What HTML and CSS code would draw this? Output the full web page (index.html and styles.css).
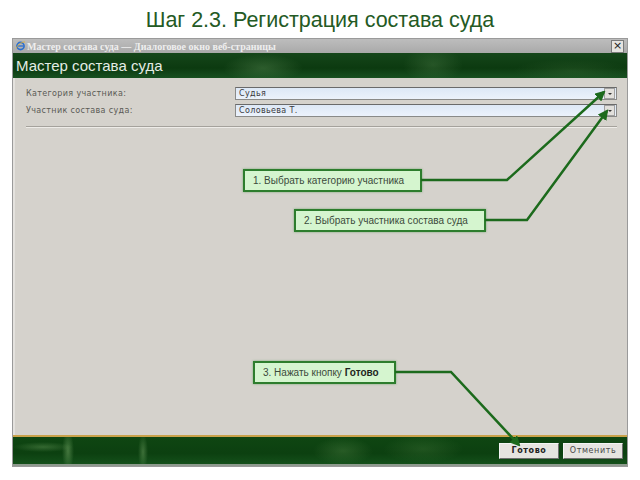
FILE: index.html
```html
<!DOCTYPE html>
<html lang="ru">
<head>
<meta charset="utf-8">
<title>Шаг 2.3. Регистрация состава суда</title>
<link rel="stylesheet" href="styles.css">
</head>
<body>
<h1 class="slide-title">Шаг 2.3. Регистрация состава суда</h1>
<div class="window">
  <div class="titlebar">
    <span class="ie-icon"><svg width="9" height="10" viewBox="0 0 9 10"><circle cx="4.5" cy="5" r="3.6" fill="none" stroke="#2a6fd0" stroke-width="1.6"/><path d="M1.5 5h6" stroke="#2a6fd0" stroke-width="1.3"/><path d="M0 7.5C3 2 6 1 9 1" stroke="#e0b030" stroke-width="0.9" fill="none"/></svg></span>
    <span class="titlebar-text">Мастер состава суда — Диалоговое окно веб-страницы</span>
    <span class="close-btn">×</span>
  </div>
  <div class="header"><span class="header-text">Мастер состава суда</span></div>
  <div class="content">
    <div class="form">
      <label class="label">Категория участника:</label>
      <div class="select"><span class="select-value">Судья</span><span class="select-btn"></span></div>
      <label class="label">Участник состава суда:</label>
      <div class="select"><span class="select-value">Соловьева Т.</span><span class="select-btn"></span></div>
    </div>
    <div class="separator"></div>
  </div>
  <div class="footer">
    <button class="btn btn-primary">Готово</button>
    <button class="btn">Отменить</button>
  </div>
</div>

<div class="callout callout-1"><span>1. Выбрать категорию участника</span></div>
<div class="callout callout-2"><span>2. Выбрать участника состава суда</span></div>
<div class="callout callout-3"><span>3. Нажать кнопку <b>Готово</b></span></div>

<svg class="arrows" width="640" height="480" viewBox="0 0 640 480">
  <defs>
    <marker id="ah" viewBox="0 0 10 10" refX="8" refY="5" markerWidth="4.2" markerHeight="4.2" orient="auto" markerUnits="strokeWidth">
      <path d="M0 0L10 5L0 10z" fill="#1c6a1c"/>
    </marker>
  </defs>
  <path d="M421 180H507L604 92" fill="none" stroke="#1c6a1c" stroke-width="2.5" marker-end="url(#ah)"/>
  <path d="M485 220H527L607 111" fill="none" stroke="#1c6a1c" stroke-width="2.5" marker-end="url(#ah)"/>
  <path d="M395 372H451L519 445" fill="none" stroke="#1c6a1c" stroke-width="2.5" marker-end="url(#ah)"/>
</svg>
</body>
</html>
```
FILE: styles.css
```css
html, body {
  margin: 0;
  padding: 0;
  background: #ffffff;
  width: 640px;
  height: 480px;
  overflow: hidden;
  position: relative;
}

.slide-title {
  margin: 0;
  padding-top: 8px;
  height: 30px;
  line-height: 24px;
  font-family: "Liberation Sans", Arial, sans-serif;
  font-weight: normal;
  font-size: 21.5px;
  color: #245a24;
  text-align: center;
}

.window {
  margin-left: 12px;
  width: 614px;
  height: 427px;
  border: 1px solid #9a9a9a;
  background: #d5d2cc;
  display: flex;
  flex-direction: column;
}

.titlebar {
  height: 14px;
  display: flex;
  align-items: center;
  background: linear-gradient(to bottom, #bdbdbd, #a9a9a9);
  padding-left: 3px;
  gap: 2px;
}
.ie-icon { display: flex; width: 9px; height: 10px; }
.titlebar-text {
  flex: 1;
  font-family: "Liberation Serif", "Times New Roman", serif;
  font-weight: bold;
  font-size: 10px;
  color: #eeeeee;
  white-space: nowrap;
}
.close-btn {
  width: 11px;
  height: 11px;
  margin-right: 3px;
  background: #e6e4e0;
  border: 1px solid #7a7a7a;
  font-family: "DejaVu Sans", sans-serif;
  font-size: 11px;
  line-height: 10px;
  text-align: center;
  color: #222;
}

.header {
  height: 25px;
  display: flex;
  align-items: center;
  padding-left: 3px;
  background:
    radial-gradient(ellipse 40px 14px at 250px 15px, rgba(120,170,110,0.3), transparent),
    radial-gradient(ellipse 30px 18px at 420px 12px, rgba(110,160,100,0.25), transparent),
    radial-gradient(ellipse 60px 12px at 560px 18px, rgba(90,140,80,0.2), transparent),
    linear-gradient(to bottom, #15461a, #0c3a10 60%, #175020);
}
.header-text {
  font-family: "Liberation Sans", Arial, sans-serif;
  font-size: 15px;
  color: #e4ece4;
}

.content {
  flex: 1;
  padding: 9px 10px 0 11px;
  border-left: 2px solid #e4e2de;
}
.form {
  display: grid;
  grid-template-columns: 209px 382px;
  row-gap: 4px;
  align-items: center;
}
.label {
  font-family: "DejaVu Sans", Verdana, sans-serif;
  font-size: 8px;
  color: #5a5a55;
  letter-spacing: 0.35px;
}
.select {
  height: 11px;
  border: 1px solid #8a8a88;
  border-top-color: #6a6a6a;
  background: linear-gradient(to bottom, #dde8f6, #ecf2fb);
  display: flex;
  align-items: center;
  padding-left: 3px;
}
.select-value {
  flex: 1;
  font-family: "DejaVu Sans", Verdana, sans-serif;
  font-size: 8px;
  color: #3a3a40;
  letter-spacing: 0.35px;
}
.select-btn {
  width: 9px;
  height: 9px;
  margin-right: 1px;
  background: #e2e0dc;
  border: 1px solid #a0a0a0;
  position: relative;
}
.select-btn::after {
  content: "";
  position: absolute;
  left: 3px;
  top: 4px;
  border-left: 2px solid transparent;
  border-right: 2px solid transparent;
  border-top: 2px solid #333;
}
.separator {
  margin-top: 9px;
  height: 1px;
  background: #a5a29c;
  border-bottom: 1px solid #eeece8;
  width: 591px;
}

.footer {
  height: 27px;
  border-top: 2px solid #c9a24a;
  border-bottom: 2px solid #8e9a8e;
  display: flex;
  align-items: center;
  justify-content: flex-end;
  gap: 4px;
  padding-right: 4px;
  background:
    radial-gradient(ellipse 6px 20px at 55px 14px, rgba(150,200,130,0.4), transparent),
    radial-gradient(ellipse 5px 18px at 130px 15px, rgba(150,200,130,0.35), transparent),
    radial-gradient(ellipse 30px 5px at 30px 10px, rgba(140,190,120,0.3), transparent),
    radial-gradient(ellipse 30px 14px at 330px 14px, rgba(120,170,100,0.25), transparent),
    radial-gradient(ellipse 40px 14px at 410px 12px, rgba(110,160,90,0.2), transparent),
    linear-gradient(to bottom, #0f4612, #0c4010 60%, #14501a);
}
.btn {
  width: 60px;
  height: 16px;
  padding: 0;
  border: 1px solid #6f6f6f;
  border-top-color: #f4f4f4;
  border-left-color: #f4f4f4;
  background: #e6e4e0;
  font-family: "DejaVu Sans", Verdana, sans-serif;
  font-size: 8px;
  letter-spacing: 0.6px;
  color: #4a4a4a;
}
.btn-primary {
  font-weight: bold;
  color: #222;
}

.callout {
  position: absolute;
  box-sizing: border-box;
  height: 23px;
  display: flex;
  align-items: center;
  padding-left: 8px;
  background: #d5f5cf;
  border: 2px solid #2d7d2d;
  box-shadow: 0 0 2px rgba(60,140,60,0.6);
  font-family: "Liberation Sans", Arial, sans-serif;
  font-size: 10px;
  color: #3b4a3b;
  white-space: nowrap;
}
.callout b { color: #1e261e; }
.callout-1 { left: 243px; top: 169px; width: 179px; }
.callout-2 { left: 294px; top: 209px; width: 192px; }
.callout-3 { left: 253px; top: 361px; width: 143px; }

.arrows {
  position: absolute;
  left: 0;
  top: 0;
  pointer-events: none;
}
```
